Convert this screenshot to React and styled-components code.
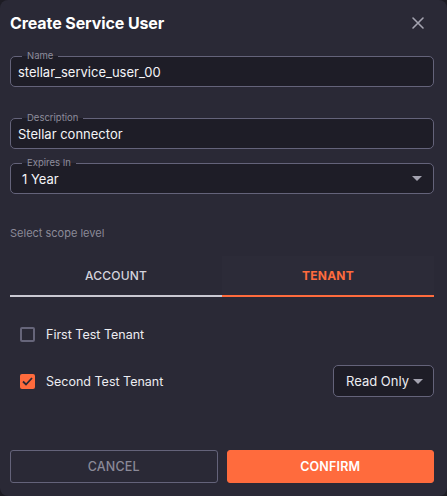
import React, { useState } from 'react'
import styled, { createGlobalStyle } from 'styled-components'

const GlobalStyle = createGlobalStyle`
  html, body {
    margin: 0;
    padding: 0;
    background: #1d1c24;
  }
  body {
    font-family: Inter, "Noto Sans", sans-serif;
    -webkit-font-smoothing: antialiased;
  }
`

const Dialog = styled.div`
  width: 447px;
  height: 496px;
  box-sizing: border-box;
  background: #2a2936;
  border-radius: 8px;
  padding: 0 13px 0 10px;
  display: flex;
  flex-direction: column;
  color: #f2f2f5;
`

const Header = styled.div`
  height: 45px;
  display: flex;
  align-items: center;
  justify-content: space-between;
`

const Title = styled.h2`
  margin: 0;
  font-size: 16px;
  font-weight: 700;
  letter-spacing: -0.1px;
  color: #ffffff;
`

const CloseButton = styled.button`
  background: none;
  border: none;
  padding: 0;
  width: 14px;
  height: 14px;
  margin-right: 9px;
  display: flex;
  color: #a4a3b0;
  cursor: pointer;
`

const Field = styled.div`
  margin-top: ${p => p.$top}px;
  padding-left: ${p => p.$pad || 7}px;
  height: 31px;
  box-sizing: border-box;
  border: 1px solid #64637a;
  border-radius: 5px;
  background: #1e1d27;
  display: flex;
  align-items: center;
  position: relative;
`

const FieldLabel = styled.span`
  position: absolute;
  left: 11px;
  top: -7px;
  padding: 0 5px;
  font-size: 9.5px;
  line-height: 12px;
  color: #8e8d9c;
  background: linear-gradient(#2a2936 50%, #1e1d27 50%);
`

const FieldValue = styled.span`
  flex: 1;
  font-size: 13px;
  color: #f4f4f7;
`

const Caret = styled.span`
  width: 0;
  height: 0;
  border-left: 5px solid transparent;
  border-right: 5px solid transparent;
  border-top: 5px solid #a4a3b0;
  margin-right: ${p => p.$right || 11}px;
`

const Hint = styled.div`
  margin-top: 32px;
  font-size: 11px;
  line-height: 14px;
  color: #8b8a98;
`

const Tabs = styled.div`
  margin-top: 16px;
  display: grid;
  grid-template-columns: 1fr 1fr;
`

const Tab = styled.div`
  height: 39px;
  display: flex;
  align-items: center;
  justify-content: center;
  font-size: 12px;
  font-weight: ${p => (p.$active ? 700 : 500)};
  color: ${p => (p.$active ? '#ff6b3d' : '#d4d3dc')};
  border-bottom: 2px solid ${p => (p.$active ? '#ff6b3d' : '#c9c8d2')};
  background: ${p => (p.$active ? '#2c2b38' : 'transparent')};
  letter-spacing: 0.2px;
`

const TenantList = styled.div`
  display: flex;
  flex-direction: column;
  gap: 15px;
  margin-top: 21px;
  padding-left: 10px;
`

const TenantRow = styled.div`
  height: 32px;
  display: flex;
  align-items: center;
  gap: 11px;
`

const Box = styled.span`
  width: 15px;
  height: 15px;
  box-sizing: border-box;
  border-radius: 2px;
  border: ${p => (p.$checked ? 'none' : '2px solid #66657a')};
  background: ${p => (p.$checked ? '#ff6b3d' : 'transparent')};
  display: flex;
  align-items: center;
  justify-content: center;
`

const TenantName = styled.span`
  flex: 1;
  font-size: 12.5px;
  color: #ececf1;
`

const RoleSelect = styled.div`
  width: 101px;
  height: 32px;
  box-sizing: border-box;
  border: 1px solid #64637a;
  border-radius: 5px;
  background: #1e1d27;
  display: flex;
  align-items: center;
  justify-content: space-between;
  padding-left: 12px;
  font-size: 13px;
  color: #ececf1;
`

const Footer = styled.div`
  margin-top: auto;
  margin-bottom: 13px;
  display: grid;
  grid-template-columns: 1fr 1fr;
  gap: 9px;
`

const Button = styled.button`
  height: 33px;
  border-radius: 3px;
  font-family: inherit;
  font-size: 12.5px;
  font-weight: ${p => (p.$primary ? 600 : 500)};
  letter-spacing: 0.2px;
  border: 1px solid ${p => (p.$primary ? '#ff6b3d' : '#64637a')};
  background: ${p => (p.$primary ? '#ff6b3d' : 'transparent')};
  color: ${p => (p.$primary ? '#ffffff' : '#8b8a98')};
  cursor: pointer;
`

export default function App() {
  const [tab] = useState('tenant')
  return (
    <>
      <GlobalStyle />
      <Dialog>
        <Header>
          <Title>Create Service User</Title>
          <CloseButton aria-label="close">
            <svg width="14" height="14" viewBox="0 0 14 14">
              <path d="M2 2 L12 12 M12 2 L2 12" stroke="currentColor" strokeWidth="1.6" strokeLinecap="round" />
            </svg>
          </CloseButton>
        </Header>

        <Field $top={11}>
          <FieldLabel>Name</FieldLabel>
          <FieldValue>stellar_service_user_00</FieldValue>
        </Field>

        <Field $top={31}>
          <FieldLabel>Description</FieldLabel>
          <FieldValue>Stellar connector</FieldValue>
        </Field>

        <Field $top={14} $pad={11}>
          <FieldLabel>Expires In</FieldLabel>
          <FieldValue>1 Year</FieldValue>
          <Caret />
        </Field>

        <Hint>Select scope level</Hint>

        <Tabs>
          <Tab $active={tab === 'account'}>ACCOUNT</Tab>
          <Tab $active={tab === 'tenant'}>TENANT</Tab>
        </Tabs>

        <TenantList>
          <TenantRow>
            <Box />
            <TenantName>First Test Tenant</TenantName>
          </TenantRow>
          <TenantRow>
            <Box $checked>
              <svg width="11" height="9" viewBox="0 0 11 9">
                <path d="M1 4.5 L4 7.5 L10 1" fill="none" stroke="#2a2936" strokeWidth="1.8" />
              </svg>
            </Box>
            <TenantName>Second Test Tenant</TenantName>
            <RoleSelect>
              Read Only
              <Caret $right={10} />
            </RoleSelect>
          </TenantRow>
        </TenantList>

        <Footer>
          <Button>CANCEL</Button>
          <Button $primary>CONFIRM</Button>
        </Footer>
      </Dialog>
    </>
  )
}
